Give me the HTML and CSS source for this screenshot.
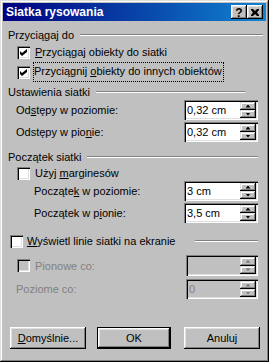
FILE: index.html
```html
<!DOCTYPE html>
<html lang="pl">
<head>
<meta charset="utf-8">
<title>Siatka rysowania</title>
<link rel="stylesheet" href="styles.css">
</head>
<body>
<div class="window">
  <div class="titlebar">
    <span class="title">Siatka rysowania</span>
    <div class="tb-btns">
      <span class="tbtn help">?</span>
      <span class="tbtn close"><svg width="8" height="7" viewBox="0 0 8 7"><path d="M0 0h2l2 2 2-2h2v1l-2 2.5 2 2.5v1h-2l-2-2-2 2h-2v-1l2-2.5-2-2.5z" fill="#000"/></svg></span>
    </div>
  </div>
  <div class="content">
    <div class="head h1"><span>Przyciągaj do</span><span class="etch"></span></div>
    <div class="cbrow ind1 r20">
      <span class="cb"><svg width="7" height="7" viewBox="0 0 7 7"><path d="M0 2l2 2 5-4v3l-5 4-2-2z" fill="#000"/></svg></span>
      <span><u>P</u>rzyciągaj obiekty do siatki</span>
    </div>
    <div class="cbrow ind1 r20">
      <span class="cb"><svg width="7" height="7" viewBox="0 0 7 7"><path d="M0 2l2 2 5-4v3l-5 4-2-2z" fill="#000"/></svg></span>
      <span class="focus">Przyciągnij <u>o</u>biekty do innych obiektów</span>
    </div>

    <div class="head h2"><span>Ustawienia siatki</span><span class="etch short"></span></div>
    <div class="frow first">
      <span class="lbl in1">Od<u>s</u>tępy w poziomie:</span>
      <div class="spin"><span class="val">0,32 cm</span><div class="arrows"><span class="sb"><i class="up"></i></span><span class="sb"><i class="down"></i></span></div></div>
    </div>
    <div class="frow">
      <span class="lbl in1">Odstępy w pio<u>n</u>ie:</span>
      <div class="spin"><span class="val">0,32 cm</span><div class="arrows"><span class="sb"><i class="up"></i></span><span class="sb"><i class="down"></i></span></div></div>
    </div>

    <div class="head h3"><span>Początek siatki</span><span class="etch"></span></div>
    <div class="cbrow ind1 r16">
      <span class="cb"></span>
      <span>Użyj <u>m</u>arginesów</span>
    </div>
    <div class="frow first">
      <span class="lbl in2">Począte<u>k</u> w poziomie:</span>
      <div class="spin"><span class="val">3 cm</span><div class="arrows"><span class="sb"><i class="up"></i></span><span class="sb"><i class="down"></i></span></div></div>
    </div>
    <div class="frow">
      <span class="lbl in2">Początek w p<u>i</u>onie:</span>
      <div class="spin"><span class="val">3,5 cm</span><div class="arrows"><span class="sb"><i class="up"></i></span><span class="sb"><i class="down"></i></span></div></div>
    </div>

    <div class="cbrow ind0 r16 show">
      <span class="cb"></span>
      <span><u>W</u>yświetl linie siatki na ekranie</span>
      <span class="etch tail"></span>
    </div>
    <div class="frow pion">
      <div class="cbrow ind1 dis">
        <span class="cb disabled"></span>
        <span class="dtext">Pionowe co:</span>
      </div>
      <div class="spin disabled narrow tall"><span class="val"></span><div class="arrows"><span class="sb"><i class="up"></i></span><span class="sb"><i class="down"></i></span></div></div>
    </div>
    <div class="frow poz">
      <span class="lbl in1 dtext">Poziome co:</span>
      <div class="spin disabled narrow"><span class="val dtext">0</span><div class="arrows"><span class="sb"><i class="up"></i></span><span class="sb"><i class="down"></i></span></div></div>
    </div>

    <div class="buttons">
      <span class="btn b1"><u>D</u>omyślnie...</span>
      <span class="btn def">OK</span>
      <span class="btn b3">Anuluj</span>
    </div>
  </div>
</div>
</body>
</html>
```
FILE: styles.css
```css
* { box-sizing: border-box; }
html, body { margin: 0; padding: 0; background: #c0c0c0; }
body {
  font-family: "Liberation Sans", Arial, sans-serif;
  font-size: 11px;
  color: #000;
}
u { text-decoration: underline; text-underline-offset: 1px; }

.window {
  width: 269px;
  height: 362px;
  padding: 3px;
  background: #c0c0c0;
  box-shadow: inset -1px -1px #000, inset 1px 1px #dfdfdf, inset -2px -2px #808080, inset 2px 2px #fff;
}

.titlebar {
  height: 18px;
  display: flex;
  align-items: center;
  padding: 0 3px 0 3px;
  background: linear-gradient(to right, #000080, #1084d0);
  color: #fff;
}
.title { font-weight: bold; font-size: 12px; letter-spacing: 0; }
.tb-btns { margin-left: auto; display: flex; }
.tbtn {
  width: 16px;
  height: 14px;
  background: #c0c0c0;
  box-shadow: inset -1px -1px #000, inset 1px 1px #fff, inset -2px -2px #808080, inset 2px 2px #dfdfdf;
  display: flex;
  align-items: center;
  justify-content: center;
  color: #000;
}
.help { font-weight: bold; font-size: 12px; line-height: 14px; padding-top: 1px; }
.close { margin-left: 0; }

.content { padding: 0 8px 0 5px; }

.head { display: flex; align-items: center; }
.h1 { margin-top: 7px; height: 14px; margin-right: -5px; }
.h2 { margin-top: 2px; height: 16px; }
.h3 { margin-top: 7px; height: 16px; }
.etch {
  flex: 1;
  height: 2px;
  margin-left: 6px;
  border-top: 1px solid #808080;
  border-bottom: 1px solid #fff;
}
.etch.short { margin-right: 13px; }
.etch.tail { flex: none; width: 63px; margin-left: auto; }

.cbrow { display: flex; align-items: center; }
.r20 { height: 20px; }
.r16 { height: 16px; }
.ind1 { padding-left: 9px; }
.ind0 { padding-left: 2px; }
.cbrow .cb { margin-right: 5px; }
.ind0 .cb { margin-right: 4px; }
.show { margin-top: 10px; }

.cb {
  width: 13px;
  height: 13px;
  flex: none;
  background: #fff;
  box-shadow: inset 1px 1px #808080, inset 2px 2px #000, inset -1px -1px #fff, inset -2px -2px #dfdfdf;
  display: flex;
  align-items: center;
  justify-content: center;
}
.cb.disabled { background: #c0c0c0; }

.focus {
  margin-left: -1px;
  padding: 2px 1px 3px 0px;
  outline: 1px dotted #000;
  outline-offset: 0;
  line-height: 13px;
}

.frow { display: flex; align-items: center; height: 20px; margin-top: 2px; }
.frow.first { margin-top: 0; }
.lbl.in1 { padding-left: 8px; }
.lbl.in2 { padding-left: 26px; }
.frow.pion { margin-top: 6px; height: 21px; }
.frow.poz { margin-top: 3px; }

.spin {
  margin-left: auto;
  width: 74px;
  height: 20px;
  padding: 2px;
  background: #fff;
  display: flex;
  box-shadow: inset 1px 1px #808080, inset 2px 2px #000, inset -1px -1px #fff, inset -2px -2px #dfdfdf;
}
.spin.narrow { width: 72px; }
.spin.tall { height: 21px; }
.spin.disabled { background: #c0c0c0; }
.val { flex: 1; padding-left: 1px; line-height: 16px; }
.arrows { width: 16px; display: flex; flex-direction: column; }
.sb {
  flex: 1;
  background: #c0c0c0;
  box-shadow: inset -1px -1px #000, inset 1px 1px #dfdfdf, inset -2px -2px #808080, inset 2px 2px #fff;
  display: flex;
  align-items: center;
  justify-content: center;
}
.sb i { display: block; width: 5px; height: 3px; background: #000; }
.sb i.up { clip-path: polygon(50% 0, 100% 100%, 0 100%); }
.sb i.down { clip-path: polygon(0 0, 100% 0, 50% 100%); }
.disabled .sb i { background: #808080; }

.dtext { color: #808080; }

.buttons { display: flex; margin-top: 28px; height: 22px; }
.btn {
  height: 22px;
  display: flex;
  align-items: center;
  justify-content: center;
  background: #c0c0c0;
  box-shadow: inset -1px -1px #000, inset 1px 1px #fff, inset -2px -2px #808080, inset 2px 2px #dfdfdf;
}
.b1 { width: 76px; margin-left: 2px; }
.def {
  width: 74px;
  margin-left: 11px;
  box-shadow: inset 0 0 0 1px #000, inset -2px -2px #000, inset 2px 2px #fff, inset -3px -3px #808080, inset 3px 3px #dfdfdf;
}
.b3 { width: 76px; margin-left: auto; margin-right: -2px; }
```
